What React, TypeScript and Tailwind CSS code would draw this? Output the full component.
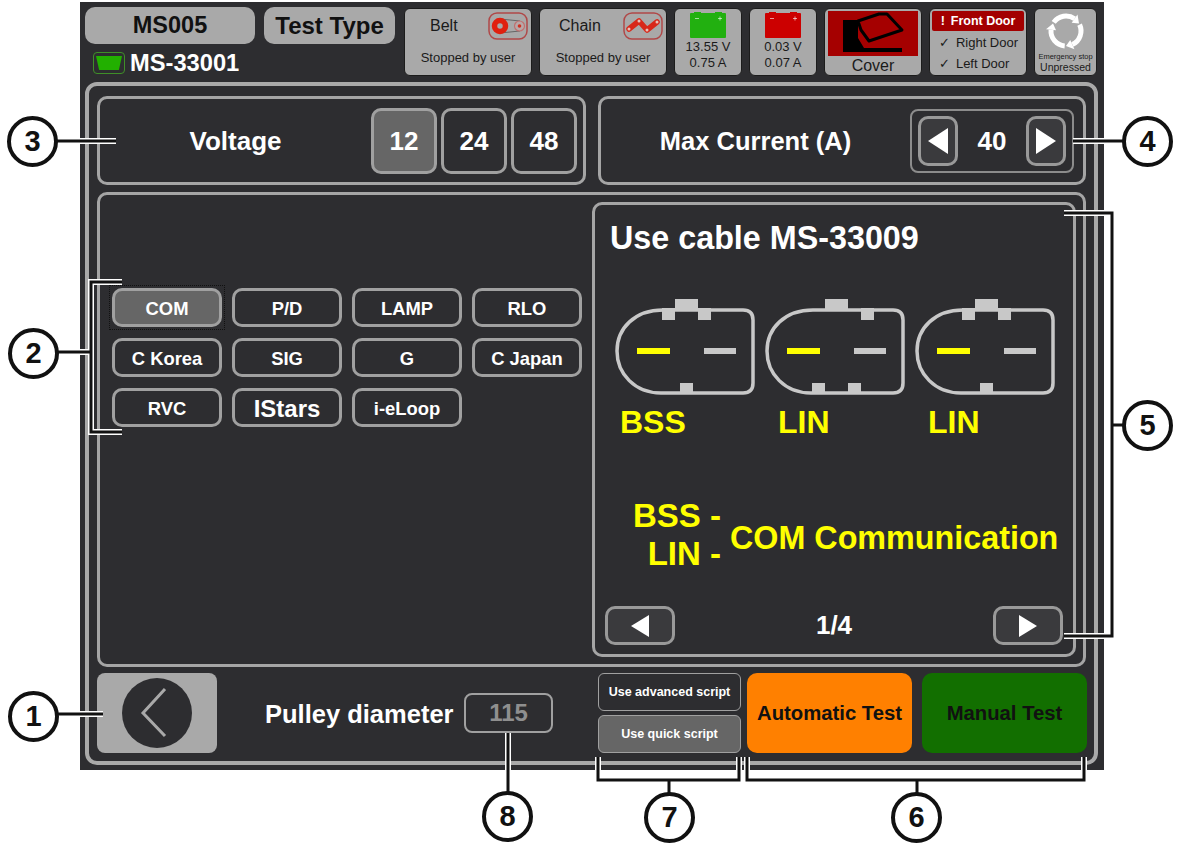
import React from 'react';

const chips = ['COM', 'P/D', 'LAMP', 'RLO', 'C Korea', 'SIG', 'G', 'C Japan', 'RVC', 'IStars', 'i-eLoop'];

const connectors = [
  { id: 'bss', top: [47, 83], bottom: [65] },
  { id: 'lin1', top: [96], bottom: [47, 83] },
  { id: 'lin2', top: [47, 83], bottom: [65] },
];

function Connector({ top, bottom }: { top: number[]; bottom: number[] }) {
  return (
    <svg width="140" height="96" viewBox="0 0 140 96" className="shrink-0">
      <path d="M48 11H128Q138 11 138 21V84Q138 94 128 94H46C20 94 2 75 2 52C2 29 20 11 48 11Z" fill="none" stroke="#c8c8c8" strokeWidth="3.5" />
      <rect x="60" y="0" width="23" height="10" fill="#c8c8c8" />
      {top.map((x) => <rect key={x} x={x} y="9" width="13" height="12" fill="#c8c8c8" />)}
      {bottom.map((x) => <rect key={x} x={x} y="84" width="13" height="10" fill="#c8c8c8" />)}
      <rect x="22" y="49" width="33" height="6" fill="#ffff00" />
      <rect x="89" y="49" width="32" height="6" fill="#c8c8c8" />
    </svg>
  );
}

function Triangle({ dir, w = 20, h = 26 }: { dir: 'left' | 'right'; w?: number; h?: number }) {
  return (
    <svg width={w} height={h} viewBox="0 0 20 20" preserveAspectRatio="none">
      <polygon points={dir === 'left' ? '20,0 20,20 0,10' : '0,0 0,20 20,10'} fill="#fff" />
    </svg>
  );
}

function Battery({ color }: { color: string }) {
  return (
    <svg width="36" height="26" viewBox="0 0 36 26">
      <rect x="0" y="1" width="36" height="25" rx="1" fill={color} />
      <rect x="4" y="0" width="7" height="2" fill={color} />
      <rect x="25" y="0" width="7" height="2" fill={color} />
      <rect x="5" y="6" width="4" height="1" fill="#ffffff" opacity="0.6" />
      <rect x="28" y="6" width="4" height="1" fill="#ffffff" opacity="0.6" />
      <rect x="29.5" y="4.5" width="1" height="4" fill="#ffffff" opacity="0.6" />
    </svg>
  );
}

function BeltIcon() {
  return (
    <svg width="40" height="28" viewBox="0 0 40 28">
      <rect x="1" y="1" width="38" height="26" rx="8" fill="none" stroke="#b04848" strokeWidth="1.5" />
      <path d="M12 7L32 9M12 21L32 19" stroke="#666" strokeWidth="1" />
      <circle cx="12" cy="14" r="5.5" fill="#a9a9a9" stroke="#e0200f" strokeWidth="5.5" />
      <circle cx="31.5" cy="14" r="5" fill="#b8a8a8" stroke="#c07070" strokeWidth="1.2" />
      <circle cx="31.5" cy="14" r="1.8" fill="#d03020" />
    </svg>
  );
}

function ChainIcon() {
  return (
    <svg width="40" height="28" viewBox="0 0 40 28">
      <rect x="1" y="1" width="38" height="26" rx="8" fill="none" stroke="#b04848" strokeWidth="1.5" />
      <polyline points="6,17 16,9 24,18 34,10" fill="none" stroke="#d8281a" strokeWidth="5.5" strokeLinejoin="round" strokeLinecap="round" />
      {[[6, 17], [16, 9], [24, 18], [34, 10]].map(([x, y]) => (
        <circle key={x} cx={x} cy={y} r="1.5" fill="#e8c0b8" />
      ))}
    </svg>
  );
}

function CoverIcon() {
  return (
    <svg width="90" height="45" viewBox="0 0 90 45">
      <rect width="90" height="45" fill="#a50000" />
      <polygon points="15,9 30,9 30,27 36,37 74,37 74,41 15,41" fill="#000" />
      <polygon points="30,10 51,3 59,3 74,19 41,30 33,19" fill="none" stroke="#000" strokeWidth="3" strokeLinejoin="round" />
    </svg>
  );
}

function StopIcon() {
  return (
    <svg width="40" height="40" viewBox="0 0 40 40">
      {[0, 120, 240].map((r) => (
        <g key={r} transform={`rotate(${r} 20 20)`}>
          <path d="M7.7 11.4A15 15 0 0 1 28.6 7.7" fill="none" stroke="#fff" strokeWidth="5" />
          <polygon points="25.7,11.8 31.5,3.6 33,12.5" fill="#fff" />
        </g>
      ))}
    </svg>
  );
}

function Tile({ w, children }: { w: string; children: React.ReactNode }) {
  return <div className={`${w} h-[68px] shrink-0 rounded-md border border-[#1c1c1c] bg-[#a9a9a9] text-[#1a1a1a]`}>{children}</div>;
}

function Callout({ n, pos }: { n: number; pos: string }) {
  return (
    <div className={`absolute ${pos} flex h-[51px] w-[51px] items-center justify-center rounded-full border-[4px] border-[#111] bg-white text-[29px] font-bold leading-none text-[#111]`}>
      {n}
    </div>
  );
}

export default function App() {
  return (
    <div className="relative h-[843px] w-[1180px] overflow-hidden bg-white pl-[80px] pt-[2px] font-['Liberation_Sans',Arial,sans-serif]">
      <div className="h-[768px] w-[1024px] bg-[#2d2d30] px-[5px] pt-[5px]">
        {/* status strip */}
        <div className="flex h-[75px]">
          <div className="w-[310px] shrink-0">
            <div className="flex gap-[9px]">
              <div className="flex h-[37px] w-[170px] items-center justify-center rounded-[10px] bg-[#a9a9a9] text-[23.5px] font-bold text-[#111]">MS005</div>
              <div className="flex h-[37px] w-[131px] items-center justify-center rounded-[10px] bg-[#a9a9a9] text-[24px] font-bold text-[#111]">Test Type</div>
            </div>
            <div className="ml-[8px] mt-[7px] flex items-center gap-[5px]">
              <div className="flex h-[22px] w-[32px] items-center justify-center rounded-[4px] border border-[#3f8f28]">
                <div className="h-[14px] w-[26px] bg-[#22b000] [clip-path:polygon(0_0,100%_0,88%_100%,12%_100%)]" />
              </div>
              <span className="text-[23.7px] font-bold leading-[24px] text-white">MS-33001</span>
            </div>
          </div>
          <div className="ml-[9px] mt-[1px] flex gap-[7px]">
            <Tile w="w-[128px]">
              <div className="flex h-[32px] items-start pl-[25px] pt-[3px]">
                <span className="mt-[6px] w-[58px] text-[16px] leading-[16px]">Belt</span>
                <BeltIcon />
              </div>
              <div className="mt-[9px] text-center text-[13px] leading-[16px]">Stopped by user</div>
            </Tile>
            <Tile w="w-[128px]">
              <div className="flex h-[32px] items-start pl-[19px] pt-[3px]">
                <span className="mt-[6px] w-[64px] text-[16px] leading-[16px]">Chain</span>
                <ChainIcon />
              </div>
              <div className="mt-[9px] text-center text-[13px] leading-[16px]">Stopped by user</div>
            </Tile>
            <Tile w="w-[68px]">
              <div className="flex flex-col items-center pt-[3px]">
                <Battery color="#22b010" />
                <div className="mt-[1px] text-[13px] leading-[16px]">13.55 V</div>
                <div className="text-[13px] leading-[16px]">0.75 A</div>
              </div>
            </Tile>
            <Tile w="w-[68px]">
              <div className="flex flex-col items-center pt-[3px]">
                <Battery color="#cc0000" />
                <div className="mt-[1px] text-[13px] leading-[16px]">0.03 V</div>
                <div className="text-[13px] leading-[16px]">0.07 A</div>
              </div>
            </Tile>
            <Tile w="w-[98px]">
              <div className="flex flex-col items-center pt-[2px]">
                <CoverIcon />
                <div className="mt-[1px] text-[16px] leading-[18px]">Cover</div>
              </div>
            </Tile>
            <Tile w="w-[98px]">
              <div className="px-[2px] pt-[2px]">
                <div className="flex h-[20px] items-center justify-center gap-[6px] rounded-[2px] bg-[#a30000] text-[12.5px] font-bold text-white">
                  <span>!</span>
                  <span>Front Door</span>
                </div>
                <div className="mt-[1px] flex h-[21px] items-center gap-[6px] pl-[7px] text-[13px]">
                  <span className="font-['DejaVu_Sans',sans-serif] text-[13px] font-bold">✓</span>
                  <span>Right Door</span>
                </div>
                <div className="flex h-[21px] items-center gap-[6px] pl-[7px] text-[13px]">
                  <span className="font-['DejaVu_Sans',sans-serif] text-[13px] font-bold">✓</span>
                  <span>Left Door</span>
                </div>
              </div>
            </Tile>
            <Tile w="w-[63px]">
              <div className="flex flex-col items-center pt-[2px]">
                <StopIcon />
                <div className="mt-[1px] whitespace-nowrap text-[7.5px] leading-[9px]">Emergency stop</div>
                <div className="text-[10.5px] leading-[13px]">Unpressed</div>
              </div>
            </Tile>
          </div>
        </div>

        {/* main frame */}
        <div className="h-[683px] w-[1013px] rounded-[12px] border-[4px] border-[#a9a9a9] px-[8px] pt-[10px]">
          <div className="flex gap-[12px]">
            <div className="flex h-[89px] w-[489px] items-center rounded-[10px] border-[3px] border-[#a5a5a5] pr-[6px]">
              <div className="flex-1 pt-[2px] text-center text-[26px] font-bold text-white">Voltage</div>
              <div className="flex gap-[4px]">
                {['12', '24', '48'].map((v, i) => (
                  <div key={v} className={`flex h-[66px] w-[66px] items-center justify-center rounded-[10px] border-[3px] border-[#a0a0a0] pt-[2px] text-[26px] font-bold text-white ${i === 0 ? 'bg-[#666666]' : ''}`}>
                    {v}
                  </div>
                ))}
              </div>
            </div>
            <div className="flex h-[89px] w-[488px] items-center rounded-[10px] border-[3px] border-[#a5a5a5] pr-[9px]">
              <div className="flex-1 pt-[2px] text-center text-[25.5px] font-bold text-white">Max Current (A)</div>
              <div className="flex h-[64px] w-[164px] items-center justify-between rounded-[8px] border-2 border-[#8c8c8c] px-[6px]">
                <div className="flex h-[50px] w-[40px] items-center justify-center rounded-[10px] border-[3px] border-[#999] bg-[#3a3a3d]"><Triangle dir="left" /></div>
                <span className="pt-[2px] text-[26px] font-bold text-white">40</span>
                <div className="flex h-[50px] w-[40px] items-center justify-center rounded-[10px] border-[3px] border-[#999] bg-[#3a3a3d]"><Triangle dir="right" /></div>
              </div>
            </div>
          </div>

          <div className="mt-[7px] flex h-[475px] w-[989px] rounded-[10px] border-[3px] border-[#a5a5a5] pl-[12px] pt-[7px]">
            <div className="w-[480px] shrink-0 pt-[86px]">
              <div className="grid grid-cols-[repeat(4,110px)] gap-x-[10px] gap-y-[11px]">
                {chips.map((c, i) => (
                  <div key={c} className={`relative flex h-[39px] items-center justify-center rounded-[10px] border-[3px] border-[#a0a0a0] pt-[2px] font-bold text-white ${c === 'IStars' ? 'text-[24px]' : 'text-[18.4px]'} ${i === 0 ? 'bg-[#666666]' : ''}`}>
                    {c}
                    {i === 0 && <div className="absolute -inset-[6px] border border-dotted border-[#111]" />}
                  </div>
                ))}
              </div>
            </div>

            <div className="flex h-[455px] w-[484px] flex-col rounded-[10px] border-[3px] border-[#a5a5a5] px-[10px] pb-[9px] pt-[13px]">
              <div className="pl-[5px] text-[32.3px] font-bold leading-[40px] text-white">Use cable MS-33009</div>
              <div className="mt-[41px] flex gap-[10px] pl-[10px]">
                {connectors.map((c) => <Connector key={c.id} top={c.top} bottom={c.bottom} />)}
              </div>
              <div className="mt-[9px] flex pl-[15px] text-[32px] font-bold leading-[36px] text-[#ffff00]">
                <span className="w-[158px]">BSS</span>
                <span className="w-[150px]">LIN</span>
                <span>LIN</span>
              </div>
              <div className="mt-[57px] flex items-center pl-[19px] text-[32.3px] font-bold leading-[38px] text-[#ffff00]">
                <div className="w-[97px] whitespace-nowrap text-right text-[33px]">
                  <div>BSS -</div>
                  <div>LIN -</div>
                </div>
                <div className="ml-[9px] mt-[6px] whitespace-nowrap">COM Communication</div>
              </div>
              <div className="mt-auto flex items-center justify-between">
                <div className="flex h-[39px] w-[70px] items-center justify-center rounded-[10px] border-[3px] border-[#999] bg-[#3a3a3d]"><Triangle dir="left" w={18} h={22} /></div>
                <span className="text-[26px] font-bold text-white">1/4</span>
                <div className="flex h-[39px] w-[70px] items-center justify-center rounded-[10px] border-[3px] border-[#999] bg-[#3a3a3d]"><Triangle dir="right" w={18} h={22} /></div>
              </div>
            </div>
          </div>

          {/* bottom row */}
          <div className="mt-[6px] flex h-[80px]">
            <div className="flex w-[120px] shrink-0 items-center justify-center rounded-[8px] bg-[#a9a9a9]">
              <div className="flex h-[70px] w-[70px] items-center justify-center rounded-full bg-[#2d2d30]">
                <svg width="70" height="70" viewBox="0 0 70 70">
                  <polyline points="43,11 21,35 43,58" fill="none" stroke="#a9a9a9" strokeWidth="3" />
                </svg>
              </div>
            </div>
            <div className="ml-[48px] flex w-[288px] shrink-0 items-center">
              <span className="pt-[2px] text-[25.5px] font-bold text-white">Pulley diameter</span>
              <div className="ml-auto flex h-[40px] w-[89px] items-center justify-center rounded-[8px] border-2 border-[#a0a0a0] text-[24px] font-bold text-[#8f8f8f]">115</div>
            </div>
            <div className="ml-[45px] flex w-[143px] shrink-0 flex-col gap-[4px]">
              <div className="flex h-[38px] items-center justify-center rounded-[6px] border border-[#a0a0a0] text-[12.5px] font-bold text-white">Use advanced script</div>
              <div className="flex h-[38px] items-center justify-center rounded-[6px] border border-[#a0a0a0] bg-[#666666] text-[12.5px] font-bold text-white">Use quick script</div>
            </div>
            <div className="ml-[6px] flex w-[165px] shrink-0 items-center justify-center rounded-[10px] bg-[#ff8000] text-[20.3px] font-bold text-[#111]">Automatic Test</div>
            <div className="ml-[10px] flex w-[165px] shrink-0 items-center justify-center rounded-[10px] bg-[#126f00] text-[20.3px] font-bold text-[#111]">Manual Test</div>
          </div>
        </div>
      </div>

      {/* callouts */}
      <svg className="absolute left-0 top-0" width="1180" height="843" viewBox="0 0 1180 843" fill="none">
        {['white', '#111'].map((stroke, i) => (
          <g key={stroke} stroke={stroke} strokeWidth={i === 0 ? 6 : 3}>
            <path d="M55 714H103" />
            <path d="M55 352H90M122 282H91V432H122" />
            <path d="M55 141H116" />
            <path d="M1073 141H1125" />
            <path d="M1064 213H1112V636H1064M1112 425H1125" />
            <path d="M508 733V793" />
            <path d="M598 757V780H739V757M669 780V793" />
            <path d="M747 757V780H1084V757M917 780V793" />
          </g>
        ))}
      </svg>
      <Callout n={1} pos="left-[8px] top-[691px]" />
      <Callout n={2} pos="left-[8px] top-[328px]" />
      <Callout n={3} pos="left-[7px] top-[116px]" />
      <Callout n={4} pos="left-[1122px] top-[116px]" />
      <Callout n={5} pos="left-[1122px] top-[400px]" />
      <Callout n={6} pos="left-[891px] top-[792px]" />
      <Callout n={7} pos="left-[644px] top-[792px]" />
      <Callout n={8} pos="left-[482px] top-[791px]" />
    </div>
  );
}
